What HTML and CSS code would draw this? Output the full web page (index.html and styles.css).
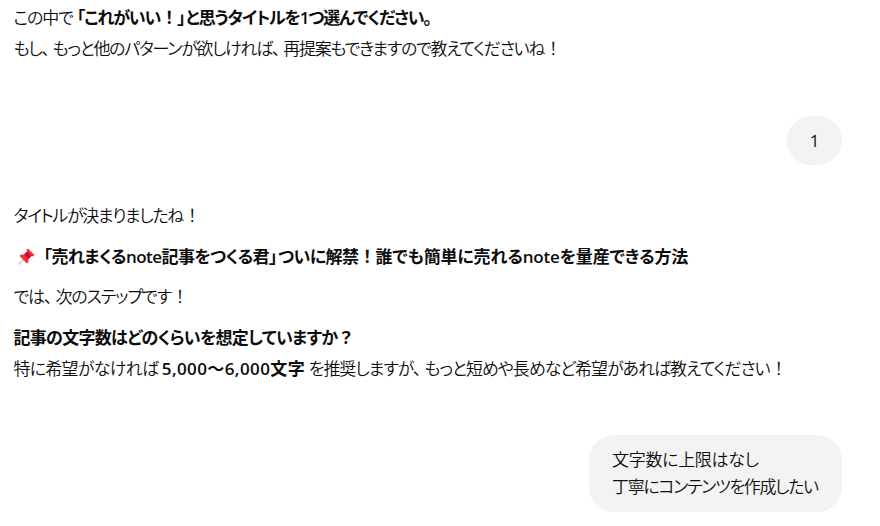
FILE: index.html
```html
<!DOCTYPE html>
<html lang="ja">
<head>
    <meta charset="UTF-8">
    <meta name="viewport" content="width=device-width, initial-scale=1.0">
    <title>noteタイトル</title>
    <link rel="stylesheet" href="styles.css">
</head>
<body>
    <div id="chat">
        <div class="reply first">
            <p class="w1">この中で<b><i class="open">「</i>これがいい<i class="mark">！</i><i class="close">」</i>と思うタイトルを1つ選んでください。</b></p>
            <p class="w2">もし<i class="comma">、</i>もっと他のパターンが欲しければ<i class="comma">、</i>再提案もできますので教えてくださいね<i class="mark">！</i></p>
        </div>

        <div class="user one">
            <p>1</p>
        </div>

        <div class="reply second">
            <p class="w3">タイトルが決まりましたね<i class="mark">！</i></p>
            <p class="title">
                <svg class="pin" viewBox="0 0 20 20">
                    <path d="M8 12 L2.500 17.500" stroke="#c4cbd0" stroke-width="1.500"/>
                    <path d="M12 1.500 L18.500 8 L17 9.500 L15.500 9 L12.500 12 L12.500 15 L11 16.500 L3.500 9 L5 7.500 L8 7.500 L11 4.500 L10.500 3 Z" fill="#f8312f"/>
                    <path d="M8 7.500 L11 4.500 L15.500 9 L12.500 12 Z" fill="#ca0b4a"/>
                </svg>
                <b class="w4"><i class="open">「</i>売れまくるnote記事をつくる君<i class="close">」</i>ついに解禁<i class="mark">！</i><span class="w4-end">誰でも簡単に売れるnoteを量産できる方法</span></b>
            </p>
            <p class="w5">では<i class="comma">、</i>次のステップです<i class="mark">！</i></p>
            <p class="question w6"><b>記事の文字数はどのくらいを想定していますか<i class="mark">？</i></b></p>
            <p class="w7">特に希望がなければ <b class="count">5,000～6,000文字</b> <span class="w7-end">を推奨しますが<i class="comma">、</i>もっと短めや長めなど希望があれば教えてください<i class="mark">！</i></span></p>
        </div>

        <div class="user two">
            <p class="w8">文字数に上限はなし</p>
            <p class="w9">丁寧にコンテンツを作成したい</p>
        </div>
    </div>
</body>
</html>
```
FILE: styles.css
```css
* {
    box-sizing: border-box;
}
body {
    margin: 0;
    background: #fff;
    color: #0d0d0d;
    font-family: "Open Sans", "Noto Sans CJK JP", sans-serif;
    font-size: 17px;
    font-weight: 350;
    font-feature-settings: "palt";
}
p {
    margin: 0;
    white-space: nowrap;
}
b {
    font-weight: 600;
}
/* punctuation, wider than the kana */
i {
    font-style: normal;
}
.mark {
    display: inline-block;
    width: 17px;
    text-align: center;
}
.open {
    margin-left: 4px;
}
.close {
    margin-right: 1px;
}
.comma {
    margin-right: 4px;
}
#chat {
    display: flex;
    flex-direction: column;
    height: 526px;
    padding: 2px 38px 0 13.5px;
}
.reply p {
    line-height: 31px;
}
.user {
    align-self: flex-end;
    background: #f3f3f3;
    border-radius: 25px;
    line-height: 27px;
}
.one {
    width: 55px;
    margin-top: 52px;
    padding: 11px 0;
    text-align: center;
    font-weight: 500;
}
.second {
    margin-top: 35px;
}
.second p {
    margin-bottom: 10px;
}
.second .title {
    margin-bottom: 9px;
}
.second .question {
    margin-bottom: 0;
}
.title {
    display: flex;
    align-items: center;
}
.pin {
    width: 20px;
    height: 20px;
    margin: 0 4px 0 2px;
    fill: none;
}
.two {
    width: 253px;
    height: 77px;
    margin-top: 41px;
    padding: 11px 24px 11px 23px;
}
/* letter spacing of each line */
.w1 {
    letter-spacing: -1.14px;
}
.w2 {
    letter-spacing: -1.28px;
}
.w3 {
    letter-spacing: -1.35px;
}
.w4 {
    letter-spacing: -0.55px;
}
.w4-end {
    letter-spacing: -0.18px;
}
.w5 {
    letter-spacing: -1.1px;
}
.w6 {
    letter-spacing: -0.7px;
}
.w7 {
    letter-spacing: -0.75px;
}
.count {
    letter-spacing: 0.4px;
}
.w7-end {
    letter-spacing: -1.03px;
}
.w8 {
    letter-spacing: -0.3px;
}
.w9 {
    letter-spacing: -1.3px;
}
```
